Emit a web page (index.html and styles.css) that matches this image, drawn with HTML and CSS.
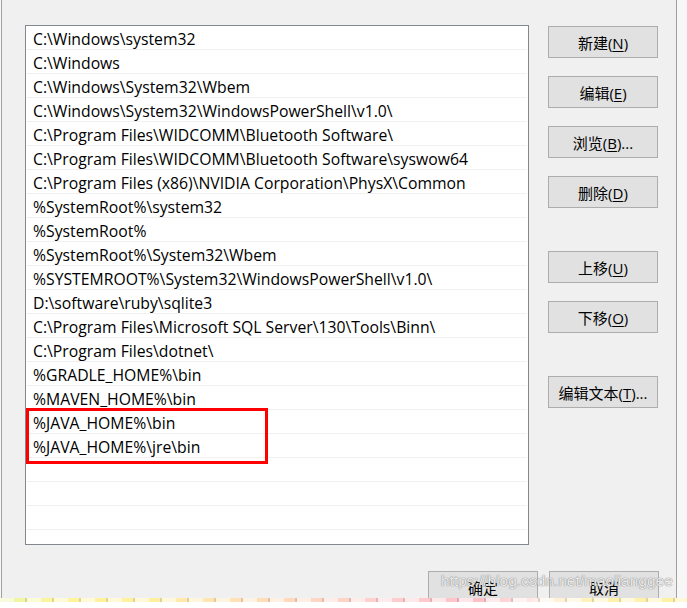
FILE: index.html
```html
<!DOCTYPE html>
<html lang="zh-CN">
<head>
  <meta charset="UTF-8">
  <title>编辑环境变量</title>
  <link rel="stylesheet" href="styles.css">
</head>
<body>
  <div class="frame">
    <div class="main">
      <div class="path-list">
        <div class="row">C:\Windows\system32</div>
        <div class="row">C:\Windows</div>
        <div class="row">C:\Windows\System32\Wbem</div>
        <div class="row">C:\Windows\System32\WindowsPowerShell\v1.0\</div>
        <div class="row">C:\Program Files\WIDCOMM\Bluetooth Software\</div>
        <div class="row">C:\Program Files\WIDCOMM\Bluetooth Software\syswow64</div>
        <div class="row">C:\Program Files (x86)\NVIDIA Corporation\PhysX\Common</div>
        <div class="row">%SystemRoot%\system32</div>
        <div class="row">%SystemRoot%</div>
        <div class="row">%SystemRoot%\System32\Wbem</div>
        <div class="row">%SYSTEMROOT%\System32\WindowsPowerShell\v1.0\</div>
        <div class="row">D:\software\ruby\sqlite3</div>
        <div class="row">C:\Program Files\Microsoft SQL Server\130\Tools\Binn\</div>
        <div class="row">C:\Program Files\dotnet\</div>
        <div class="row">%GRADLE_HOME%\bin</div>
        <div class="row">%MAVEN_HOME%\bin</div>
        <div class="row">%JAVA_HOME%\bin</div>
        <div class="row">%JAVA_HOME%\jre\bin</div>
        <div class="row"></div>
        <div class="row"></div>
        <div class="row"></div>
        <div class="row"></div>
        <div class="mark"></div>
      </div>

      <div class="side-buttons">
        <button class="btn">新建(<u>N</u>)</button>
        <button class="btn">编辑(<u>E</u>)</button>
        <button class="btn">浏览(<u>B</u>)...</button>
        <button class="btn">删除(<u>D</u>)</button>
        <button class="btn group">上移(<u>U</u>)</button>
        <button class="btn">下移(<u>O</u>)</button>
        <button class="btn group">编辑文本(<u>T</u>)...</button>
      </div>
    </div>

    <div class="footer">
      <button class="btn">确定</button>
      <button class="btn">取消</button>
    </div>

    <div class="watermark">https://blog.csdn.net/maolianggee</div>
  </div>
  <div class="strip"></div>
</body>
</html>
```

FILE: styles.css
```css
body {
  margin: 0;
  width: 687px;
  height: 608px;
  overflow: hidden;
  background-color: #f7f7f7;
  font-family: "Open Sans", "Noto Sans CJK SC", sans-serif;
  color: #000;
}

.frame {
  position: relative;
  box-sizing: border-box;
  width: 676px;
  height: 598px;
  margin-left: 1px;
  padding: 25px 0 0 23px;
  background-color: #f0f0f0;
  border-left: 1px solid #a0a0a0;
  border-right: 1px solid #a0a0a0;
  overflow: hidden;
}

.main {
  display: flex;
  gap: 19px;
}

.path-list {
  position: relative;
  box-sizing: border-box;
  width: 504px;
  height: 520px;
  padding: 0 1px;
  background-color: #fff;
  border: 1px solid #828790;
}

.row {
  height: 23px;
  border-bottom: 1px solid #f0f0f0;
  padding-left: 6px;
  font-size: 15.75px;
  line-height: 26px;
  white-space: nowrap;
}

/* 红框标记 */
.mark {
  position: absolute;
  left: 0;
  top: 382px;
  width: 236px;
  height: 50px;
  border: 3px solid #f00;
}

.side-buttons {
  display: flex;
  flex-direction: column;
  gap: 18px;
  padding-top: 1px;
}

.btn {
  box-sizing: border-box;
  width: 110px;
  height: 32px;
  padding: 0;
  background-color: #e1e1e1;
  border: 1px solid #adadad;
  border-radius: 0;
  font-family: "Open Sans", "Noto Sans CJK SC", sans-serif;
  font-size: 15px;
  color: #000;
}

.btn u {
  text-underline-offset: 2px;
}

.side-buttons .group {
  margin-top: 25px;
}

.footer {
  display: flex;
  justify-content: flex-end;
  gap: 11px;
  margin-top: 26px;
  padding-right: 17px;
}

.watermark {
  position: absolute;
  left: 439px;
  top: 572px;
  font-family: "Liberation Sans", sans-serif;
  font-size: 15.5px;
  color: rgba(255, 255, 255, 0.85);
  text-shadow: 0 0 1px #777, 0 0 1px #999;
}

.strip {
  height: 10px;
  background-color: #fff;
}

.strip::before {
  content: "";
  display: block;
  height: 4px;
  background:
    repeating-linear-gradient(90deg, rgba(255,255,255,0.6) 0 14px, rgba(255,255,255,0) 14px 25px, rgba(0,0,0,0.12) 25px 27px),
    linear-gradient(90deg, #eaf6a4 0, #fff59d 60px, #fff0a0 150px, #ffe4b5 220px, #ffd8c0 300px, #ffd0d0 380px, #ffc0c8 480px, #fff0e8 540px, #fff2b0 600px, #fff0a0 687px);
}
```
